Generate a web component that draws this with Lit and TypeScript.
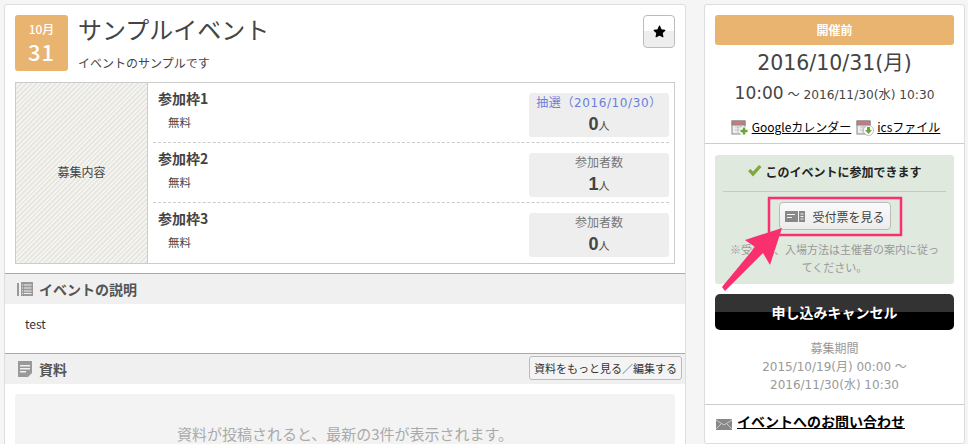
import { LitElement, html, css, svg } from "lit";
import { customElement } from "lit/decorators.js";

const JP = css`"Noto Sans CJK JP", "Noto Sans", sans-serif`;
const DJ = css`"DejaVu Sans", "Noto Sans CJK JP", sans-serif`;
const slots = [
  { name: "参加枠1", label: "抽選（2016/10/30）", n: "0", blue: true },
  { name: "参加枠2", label: "参加者数", n: "1", blue: false },
  { name: "参加枠3", label: "参加者数", n: "0", blue: false },
];

@customElement("app-root")
export class AppRoot extends LitElement {
  static styles = css`
    :host { display: block; width: 968px; height: 444px; overflow: hidden; background: #f5f5f5; font-family: ${JP}; color: #444; position: relative; }
    * { box-sizing: border-box; }
    .page { display: flex; align-items: flex-start; gap: 18px; padding: 4px 4px 0; height: 444px; }
    .main { width: 682px; height: 460px; flex: none; background: #fff; border: 1px solid #ddd; border-radius: 3px; }
    .side { width: 261px; height: 440px; flex: none; background: #fff; border: 1px solid #ddd; border-radius: 3px; display: flex; flex-direction: column; }
    .head { display: flex; height: 77px; padding: 10px 10px 0; }
    .cal { width: 53px; height: 56px; background: #e8b46f; border-radius: 3px; color: #fff; display: flex; flex-direction: column; align-items: center; }
    .cal .m { font-size: 12px; line-height: 14px; margin-top: 7px; font-weight: 500; }
    .cal .d { font-size: 22px; line-height: 24px; margin-top: 3px; font-weight: 500; letter-spacing: 1px; }
    .titles { flex: 1; padding-left: 10px; }
    h1 { margin: -1px 0 0; font-size: 24px; line-height: 30px; font-weight: 400; color: #444; }
    .sub { font-size: 12px; line-height: 16px; margin-top: 11px; color: #444; }
    .star { width: 32px; height: 33px; border: 1px solid #bbb; border-radius: 4px; background: linear-gradient(#fff 0 50%, #eee 50%); display: flex; align-items: center; justify-content: center; }
    .table { margin: 0 10px; height: 182px; border: 1px solid #ccc; display: flex; }
    .lhead { width: 132px; flex: none; border-right: 1px solid #ccc; display: flex; align-items: center; justify-content: center; padding-bottom: 4px; font-size: 12px; color: #444;
      background: repeating-linear-gradient(135deg, #e8e7e1 0 2px, #f5f5f1 2px 3.4px); }
    .rows { flex: 1; padding: 0 5px; }
    .row { height: 60px; display: flex; justify-content: space-between; padding: 8px 0 0 5px; border-bottom: 1px dashed #ccc; }
    .row:last-child { border-bottom: 0; }
    .row b { display: block; font-size: 14px; line-height: 14px; font-weight: 700; color: #444; }
    .price { font-size: 11.5px; line-height: 14px; margin: 10px 0 0 10px; color: #444; }
    .count { width: 140px; height: 44px; background: #eee; border-radius: 3px; text-align: center; margin-top: 2px; font-family: ${DJ}; font-size: 12px; line-height: 16px; color: #777; padding-top: 2px; white-space: nowrap; }
    .count.blue { color: #6a7fd8; letter-spacing: 0.6px; }
    .count div { margin-top: 1px; font-size: 18px; line-height: 24px; font-weight: 700; color: #444; font-family: "Liberation Sans", sans-serif; letter-spacing: 0; }
    .count small { font-size: 11px; font-weight: 400; font-family: ${JP}; }
    .sec { height: 31px; margin-top: 9px; background: #f0f0f0; border-top: 1px solid #aaa; display: flex; align-items: center; padding: 0 3px 1px 12px; gap: 6px; font-size: 14px; font-weight: 700; color: #555; }
    .sec .grow { flex: 1; }
    .body { font-size: 12px; height: 49px; padding: 12px 20px 0; line-height: 16px; color: #333; }
    .sec.two { margin-top: 0; }
    .doc { margin: 0 1px; }
    .more { height: 24px; padding: 0 4px; margin-bottom: 1px; border: 1px solid #bbb; border-radius: 3px; background: #f4f4f4; font: 400 11px ${JP}; color: #333; display: flex; align-items: center; white-space: nowrap; }
    .empty { margin: 10px 10px 0; height: 90px; background: #f3f3f3; border-radius: 3px; text-align: center; padding-top: 30px; font-size: 15px; line-height: 20px; color: #aaa; }
    .sq { padding: 10px 10px 0; height: 139px; border-bottom: 1px solid #ccc; text-align: center; flex: none; }
    .state { height: 30px; line-height: 30px; background: #e8b46f; border-radius: 3px; color: #fff; font-size: 12px; font-weight: 700; }
    .date { font-family: ${DJ}; font-size: 20.5px; line-height: 26px; margin-top: 5px; color: #444; white-space: nowrap; }
    .time { font-family: ${DJ}; font-size: 12.2px; line-height: 24px; margin-top: 5px; color: #444; white-space: nowrap; }
    .time .big { font-size: 17px; }
    .links { display: flex; justify-content: center; align-items: center; margin-top: 11px; padding-left: 2px; font-size: 12px; line-height: 16px; color: #000; gap: 3px; white-space: nowrap; }
    .links a { color: #000; text-decoration: underline; }
    .links a.first { margin-right: 2px; }
    .ok { margin: 11px 10px 0; height: 129px; background: #e0e9de; border-radius: 3px; padding: 0 8px; text-align: center; flex: none; }
    .ok .t { height: 37px; padding-bottom: 4px; border-bottom: 1px solid #c8c8c8; display: flex; align-items: center; justify-content: center; gap: 3px; font-size: 12px; font-weight: 700; color: #222; white-space: nowrap; }
    .ticket { width: 112px; height: 28px; margin: 10px auto 0; border: 1px solid #bbb; border-radius: 4px; background: linear-gradient(#fafafa, #ececec); display: flex; align-items: center; justify-content: center; gap: 7px; padding-left: 1px; font-size: 12px; color: #444; }
    .note { font-size: 11px; line-height: 18px; color: #999; margin-top: 10px; padding: 0 2px; }
    .cancel { margin: 10px 10px 0; height: 36px; flex: none; border-radius: 5px; background: linear-gradient(#333 0 50%, #000 50%); color: #fff; font-size: 14px; font-weight: 700; display: flex; align-items: center; justify-content: center; }
    .period { text-align: center; font-size: 12px; line-height: 18.5px; color: #999; margin-top: 9px; height: 65px; flex: none; }
    .period .l { font-family: ${DJ}; font-size: 12px; }
    .contact { border-top: 1px solid #ccc; height: 39px; flex: none; display: flex; align-items: center; padding: 0 11px 6px; gap: 5px; font-size: 14px; font-weight: 700; color: #000; }
    .contact a { color: #000; text-decoration: underline; }
    .mail { margin-top: 6px; }
    .over { position: absolute; left: 0; top: 0; pointer-events: none; }
  `;

  render() {
    return html`
      <div class="page">
        <div class="main">
          <div class="head">
            <div class="cal"><div class="m">10月</div><div class="d">31</div></div>
            <div class="titles"><h1>サンプルイベント</h1><div class="sub">イベントのサンプルです</div></div>
            <div class="star"><svg width="13" height="13" viewBox="0 0 24 24"><path fill="#000" stroke="#000" stroke-width="2" stroke-linejoin="round" d="M12 2l3 6.800 7 .9-5.100 4.900 1.400 7.200L12 18.300l-6.300 3.500 1.400-7.200L2 9.700l7-.9z"/></svg></div>
          </div>
          <div class="table">
            <div class="lhead">募集内容</div>
            <div class="rows">
              ${slots.map(s => html`<div class="row">
                <div><b>${s.name}</b><div class="price">無料</div></div>
                <div class="count ${s.blue ? "blue" : ""}">${s.label}<div>${s.n}<small>人</small></div></div>
              </div>`)}
            </div>
          </div>
          <div class="sec">
            <svg width="16" height="16" viewBox="0 0 16 16" fill="#999"><rect x="0" y="2" width="2" height="13"/><path fill-rule="evenodd" d="M4 1h12v14H4zM5 3.500v1h1v-1zM7 3.500v1h7.500v-1zM5 6.500v1h1v-1zM7 6.500v1h7.500v-1zM5 9.500v1h1v-1zM7 9.500v1h7.500v-1zM5 12v1h1v-1zM7 12v1h7.500v-1z"/></svg>
            イベントの説明
          </div>
          <div class="body">test</div>
          <div class="sec two">
            <svg class="doc" width="14" height="16" viewBox="0 0 14 16" fill="#999"><path fill-rule="evenodd" d="M0 0h14v12l-4 4H0zM2 4v1.500h10V4zM2 7v1.500h10V7zM2 10v1.500h6V10z"/></svg>
            資料<span class="grow"></span><span class="more">資料をもっと見る／編集する</span>
          </div>
          <div class="empty">資料が投稿されると、最新の3件が表示されます。</div>
        </div>
        <div class="side">
          <div class="sq">
            <div class="state">開催前</div>
            <div class="date">2016/10/31(月)</div>
            <div class="time"><span class="big">10:00</span> ～ 2016/11/30(水) 10:30</div>
            <div class="links">
              ${this.calIcon(true)}<a class="first">Googleカレンダー</a>
              ${this.calIcon(false)}<a>icsファイル</a>
            </div>
          </div>
          <div class="ok">
            <div class="t"><svg width="15" height="12" viewBox="0 0 15 12"><path fill="#7fa83f" d="M1 6l2.500-2 2.500 2.500L12 0l2.500 2L6 11.500z"/></svg>このイベントに参加できます</div>
            <div class="ticket">
              <svg width="20" height="11" viewBox="0 0 20 11" fill="#888"><path fill-rule="evenodd" d="M0 0h13v11H0zM2 3v1h8V3zM2 6v1h5V6z"/><path fill-rule="evenodd" d="M14 0h6v11h-6zM15.500 2.500v1h3v-1zM15.500 5v1h3V5zM15.500 7.500v1h3v-1z"/></svg>
              受付票を見る
            </div>
            <div class="note">※受付票、入場方法は主催者の案内に従ってください。</div>
          </div>
          <div class="cancel">申し込みキャンセル</div>
          <div class="period">募集期間<div class="l">2015/10/19(月) 00:00 ～</div><div class="l">2016/11/30(水) 10:30</div></div>
          <div class="contact">
            <svg class="mail" width="16" height="11" viewBox="0 0 16 11"><rect width="16" height="11" fill="#888"/><path d="M0 1l8 5 8-5M0 10l5-5M16 10l-5-5" stroke="#ddd" fill="none" stroke-width=".8"/></svg>
            <a>イベントへのお問い合わせ</a>
          </div>
        </div>
      </div>
      <svg class="over" width="968" height="444">
        <rect x="769" y="198" width="132" height="37" fill="none" stroke="#f8306f" stroke-width="2.500"/>
        <path fill="#f8306f" d="M782 228L770 265 763 253 725 291 722 287 755 247 745 240z"/>
      </svg>
    `;
  }

  calIcon(plus: boolean) {
    return html`<svg width="18" height="18" viewBox="0 0 18 18" style="flex:none">
      <rect x="1" y="3" width="13" height="13" fill="#eee" stroke="#888"/>
      <rect x="1" y="3" width="13" height="4" fill="#c97a7a" stroke="#888"/>
      ${svg`<path d="M4 9h8M4 12h8M7 7v8M10 7v8" stroke="#bbb" stroke-width=".8"/>`}
      ${plus
        ? svg`<circle cx="13" cy="13" r="4.500" fill="#fff"/><path d="M13 9.500v7M9.500 13h7" stroke="#6aa53a" stroke-width="2.500"/>`
        : svg`<circle cx="12.500" cy="12.500" r="5" fill="#fff" stroke="#999" stroke-width=".6"/><path fill="#6aa53a" d="M11 9h3v3h2l-3.500 4L9 12h2z"/>`}
    </svg>`;
  }
}
